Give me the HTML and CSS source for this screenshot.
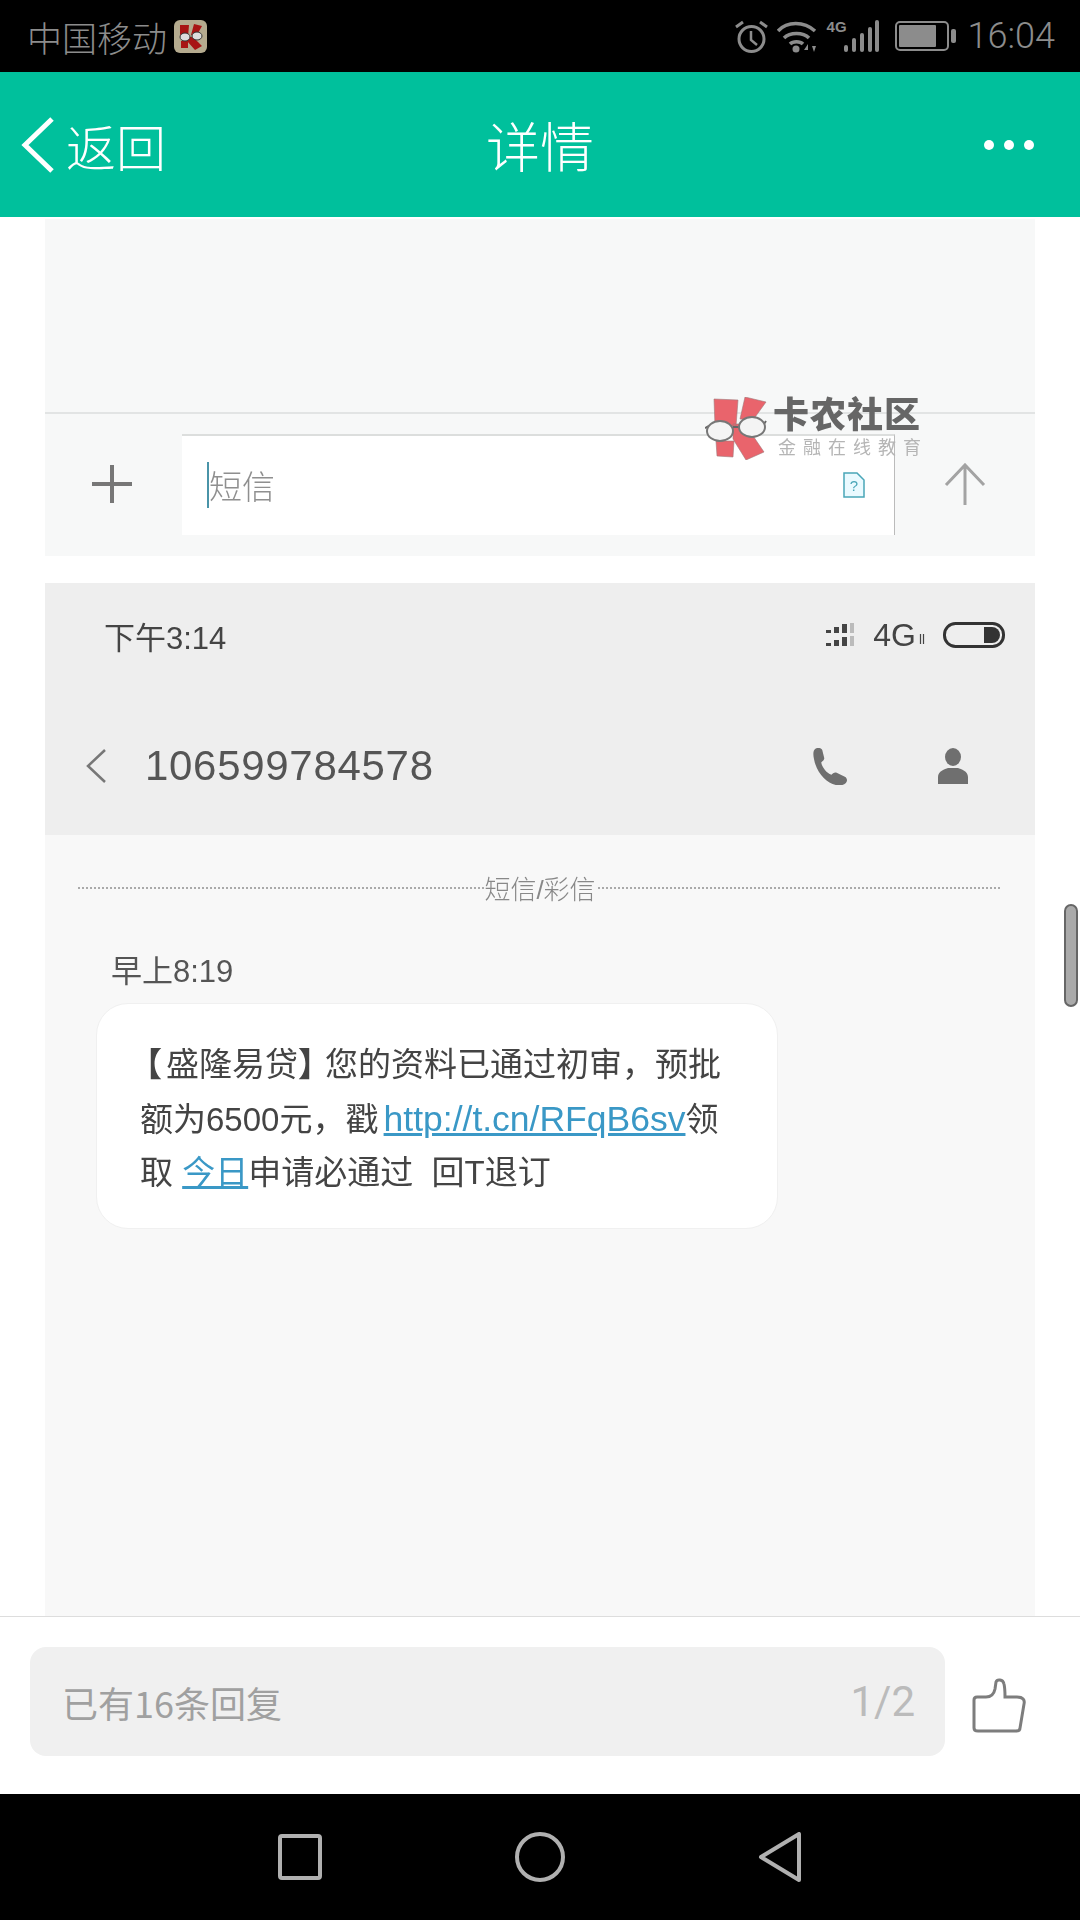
FILE: index.html
```html
<!DOCTYPE html>
<html lang="en">
<head>
    <meta charset="UTF-8">
    <meta name="viewport" content="width=device-width, initial-scale=1.0">
    <title>详情</title>
    <link rel="stylesheet" href="styles.css">
</head>
<body>
    <div class="app">
        <div class="status-bar">
            <div class="carrier">
                <span>中国移动</span>
                <svg class="app-badge" viewBox="0 0 33 33">
                    <rect width="33" height="33" rx="6" fill="#b5ab8f"/>
                    <path d="M6 5h9l-1 12h-8zM20 4l8 2-5 9h-6zM13 17h6l9 9-7 4-8-9zM7 21h7v7H7z" fill="#a81414"/>
                    <ellipse cx="11" cy="17" rx="5" ry="4" fill="#ddd" stroke="#333"/>
                    <ellipse cx="23" cy="16" rx="5" ry="4" fill="#ddd" stroke="#333"/>
                </svg>
            </div>
            <div class="status-icons">
                <svg class="ic-alarm" viewBox="0 0 33 33" fill="none" stroke="#8c8c8c">
                    <circle cx="16.500" cy="19" r="12.500" stroke-width="3"/>
                    <path d="M16 11v9l6 5" stroke-width="2.500"/>
                    <path d="M1 7l7-5M32 7l-7-5" stroke-width="3"/>
                </svg>
                <svg class="ic-wifi" viewBox="0 0 40 33" fill="none" stroke="#8c8c8c" stroke-width="3.500">
                    <path d="M1 11C10 1 27 1 38 11"/>
                    <path d="M7 18c6-6 19-6 25 0"/>
                    <path d="M13 24c3-3 10-3 13 0"/>
                    <circle cx="19" cy="29" r="3.500" fill="#8c8c8c" stroke="none"/>
                    <path d="M31 24l-4 6h4zM33 24v8M35 26h4l-2 6z" fill="#8c8c8c" stroke="none"/>
                </svg>
                <div class="net">
                    <span class="net-label">4G</span>
                    <svg class="ic-signal" viewBox="0 0 36 33" fill="#8c8c8c">
                        <rect x="0" y="25" width="4" height="7" rx="2"/>
                        <rect x="8" y="18" width="4" height="14" rx="2"/>
                        <rect x="16" y="13" width="4" height="19" rx="2"/>
                        <rect x="24" y="7" width="4" height="25" rx="2"/>
                        <rect x="31" y="0" width="4" height="32" rx="2"/>
                    </svg>
                </div>
                <svg class="ic-battery" viewBox="0 0 62 30" fill="none">
                    <rect x="1" y="1" width="52" height="28" rx="4" stroke="#8c8c8c" stroke-width="2"/>
                    <rect x="4" y="4" width="37" height="22" rx="1" fill="#8c8c8c"/>
                    <rect x="56" y="8" width="5" height="14" rx="2" fill="#8c8c8c"/>
                </svg>
                <span class="clock">16:04</span>
            </div>
        </div>

        <div class="title-bar">
            <div class="back">
                <svg class="ic-back" viewBox="0 0 33 56" fill="none" stroke="#fff" stroke-width="5">
                    <path d="M31 2L4 28l27 26"/>
                </svg>
                <span>返回</span>
            </div>
            <div class="title">详情</div>
            <div class="more"><i></i><i></i><i></i></div>
        </div>

        <div class="content">
            <div class="shot shot-top">
                <div class="shot-blank"></div>
                <div class="composer">
                    <svg class="ic-plus" viewBox="0 0 40 40" fill="none" stroke="#777" stroke-width="4">
                        <path d="M0 20h40M20 1v38"/>
                    </svg>
                    <div class="sms-input">
                        <span class="caret"></span>
                        <span class="sms-hint">短信</span>
                        <svg class="ic-sim" viewBox="0 0 24 26" fill="#eafaff" stroke="#4aa6b8" stroke-width="1.500">
                            <path d="M2 1h13l7 7v17H2z"/>
                            <text x="12" y="19" text-anchor="middle" class="sim-mark">?</text>
                        </svg>
                    </div>
                    <svg class="ic-up" viewBox="0 0 42 42" fill="none" stroke="#a3a3a3" stroke-width="3">
                        <path d="M21 42V2M2 22L21 2l19 20"/>
                    </svg>
                </div>
            </div>

            <div class="shot shot-sms">
                <div class="sms-head">
                    <div class="phone-status">
                        <span>下午3:14</span>
                        <div class="phone-icons">
                            <svg class="ic-bars" viewBox="0 0 32 24" fill="#444">
                                <rect x="0" y="7" width="5" height="3"/><rect x="8" y="4" width="5" height="6"/><rect x="16" y="1" width="5" height="9"/>
                                <rect x="24" y="0" width="4" height="10" fill="#bbb"/>
                                <rect x="0" y="20" width="5" height="3"/><rect x="8" y="17" width="5" height="6"/><rect x="16" y="14" width="5" height="9"/>
                                <rect x="24" y="13" width="4" height="10" fill="#bbb"/>
                            </svg>
                            <span class="phone-4g">4G</span>
                            <svg class="ic-updown" viewBox="0 0 8 12" fill="none" stroke="#444" stroke-width="1.200">
                                <path d="M2.500 1v10M5.500 1v10"/>
                            </svg>
                            <svg class="ic-phone-batt" viewBox="0 0 62 26" fill="none">
                                <rect x="1.500" y="1.500" width="59" height="23" rx="11" stroke="#333" stroke-width="3"/>
                                <path d="M41 5h8a8 8 0 0 1 0 16h-8z" fill="#333"/>
                            </svg>
                        </div>
                    </div>
                    <div class="sms-nav">
                        <svg class="ic-chev" viewBox="0 0 20 34" fill="none" stroke="#777" stroke-width="2.500">
                            <path d="M19 1L2 17l17 16"/>
                        </svg>
                        <span class="sender">106599784578</span>
                        <svg class="ic-call" viewBox="0 0 36 36" fill="#6f6f6f">
                            <path d="M2 1c3-2 6-1 7 1l2 8c0 2-2 3-3 4 1 5 5 10 10 12 1-1 3-3 5-2l8 4c2 1 3 4 1 6-3 3-8 3-13 1C11 32 3 22 1 11 0 6 0 3 2 1z"/>
                        </svg>
                        <svg class="ic-person" viewBox="0 0 30 36" fill="#6f6f6f">
                            <ellipse cx="15" cy="9" rx="8" ry="9"/>
                            <path d="M0 36v-7c0-6 7-8 10-9h10c3 1 10 3 10 9v7z"/>
                        </svg>
                    </div>
                </div>
                <div class="sms-body">
                    <div class="divider"><span>短信/彩信</span></div>
                    <div class="msg-time">早上8:19</div>
                    <div class="bubble">
                        <div class="line"><span class="brk-open">【</span>盛隆易贷<span class="brk-close">】</span>您的资料已通过初审，预批</div>
                        <div class="line">额为6500元，戳 <a class="link url">http://t.cn/RFqB6sv</a>领</div>
                        <div class="line">取 <a class="link">今日</a>申请必通过 &nbsp;回T退订</div>
                    </div>
                </div>
            </div>

            <div class="watermark">
                <svg class="wm-logo" viewBox="0 0 62 63">
                    <path d="M9 2l24 1-2 26H10zM11 44h18l-1 16-16-1zM40 0l21 5-13 18-13-1zM28 27h12l19 28-18 8-13-21z" fill="#e9646c" stroke="#a0787a" stroke-width=".6"/>
                    <path d="M0 31l4-2M28 30h7M61 24l-2 3" stroke="#666" stroke-width="2" fill="none"/>
                    <ellipse cx="15" cy="34" rx="13" ry="10" fill="#f4f4f4" stroke="#777" stroke-width="2"/>
                    <ellipse cx="47" cy="30" rx="13" ry="10" fill="#f4f4f4" stroke="#777" stroke-width="2"/>
                </svg>
                <div class="wm-text">
                    <div class="wm-name">卡农社区</div>
                    <div class="wm-sub">金融在线教育</div>
                </div>
            </div>

            <div class="scroll-thumb"></div>
        </div>

        <div class="reply-bar">
            <div class="reply-box">
                <span>已有16条回复</span>
                <span class="page-no">1/2</span>
            </div>
            <svg class="ic-thumb" viewBox="0 0 54 56" fill="none" stroke="#7d7d7d" stroke-width="3">
                <path d="M2 22c0-2 1-3 3-3h9c5 0 8-3 9-8l1-7c1-3 7-3 8 2 1 4 1 9 1 13h12c6 0 8 3 7 7l-4 24c0 2-2 3-4 3H6c-3 0-4-1-4-3z"/>
            </svg>
        </div>

        <div class="nav-bar">
            <svg class="ic-nav" viewBox="0 0 50 50" fill="none" stroke="#b0b0b0" stroke-width="4">
                <rect x="5" y="4" width="40" height="42" rx="2"/>
            </svg>
            <svg class="ic-nav" viewBox="0 0 50 50" fill="none" stroke="#b0b0b0" stroke-width="4">
                <circle cx="25" cy="25" r="23"/>
            </svg>
            <svg class="ic-nav" viewBox="0 0 50 50" fill="none" stroke="#b0b0b0" stroke-width="4" stroke-linejoin="round">
                <path d="M44 2v46L6 25z"/>
            </svg>
        </div>
    </div>
</body>
</html>
```

FILE: styles.css
```css
* {
    box-sizing: border-box;
}

body {
    margin: 0;
    background-color: #fff;
    font-family: "Liberation Sans", "Noto Sans CJK SC", sans-serif;
}

svg {
    display: block;
    flex: none;
}

.app {
    position: relative;
    width: 1080px;
    height: 1920px;
    display: flex;
    flex-direction: column;
    overflow: hidden;
}

/* Status Bar */
.status-bar {
    height: 72px;
    flex: none;
    background-color: #000;
    color: #8c8c8c;
    display: flex;
    justify-content: space-between;
    align-items: center;
    padding: 0 25px 0 27px;
}

.carrier {
    display: flex;
    align-items: center;
    gap: 7px;
    font-size: 35px;
    font-weight: 300;
}

.app-badge {
    width: 33px;
    height: 33px;
}

.status-icons {
    display: flex;
    align-items: center;
}

.ic-alarm {
    width: 33px;
    height: 33px;
}

.ic-wifi {
    width: 40px;
    height: 33px;
    margin-left: 9px;
}

.net {
    position: relative;
    width: 53px;
    height: 33px;
    margin-left: 10px;
}

.net-label {
    position: absolute;
    left: 0;
    top: -1px;
    font-size: 15px;
    font-weight: bold;
    line-height: 16px;
}

.ic-signal {
    position: absolute;
    right: 0;
    top: 0;
    width: 36px;
    height: 33px;
}

.ic-battery {
    width: 62px;
    height: 30px;
    margin-left: 15px;
}

.clock {
    margin-left: 11px;
    font-family: Roboto, sans-serif;
    font-size: 36px;
    font-weight: 300;
}

/* Title Bar */
.title-bar {
    position: relative;
    height: 145px;
    flex: none;
    background-color: #00c09c;
    color: #fff;
    display: flex;
    align-items: center;
    justify-content: space-between;
    padding: 0 46px 0 21px;
}

.back {
    display: flex;
    align-items: center;
    gap: 12px;
    font-size: 50px;
    font-weight: 300;
}

.ic-back {
    width: 33px;
    height: 56px;
}

.title {
    position: absolute;
    left: 0;
    right: 0;
    text-align: center;
    font-size: 54px;
    font-weight: 300;
}

.more {
    display: flex;
    gap: 10px;
}

.more i {
    width: 10px;
    height: 10px;
    border-radius: 50%;
    background-color: #fff;
}

/* Content */
.content {
    position: relative;
    flex: 1;
    min-height: 0;
    padding: 2px 45px 0;
    display: flex;
    flex-direction: column;
    gap: 27px;
}

/* the pasted screenshots are soft, so are these */
.shot {
    filter: blur(0.5px);
}

.shot-top {
    height: 337px;
    flex: none;
    background-color: #f7f8f8;
    display: flex;
    flex-direction: column;
}

.shot-blank {
    height: 193px;
    flex: none;
    border-bottom: 2px solid #e2e4e4;
    box-sizing: content-box;
}

.composer {
    flex: 1;
    display: flex;
    align-items: center;
    padding: 0 49px 2px 47px;
}

.ic-plus {
    width: 40px;
    height: 40px;
}

.sms-input {
    width: 714px;
    height: 101px;
    margin: 0 49px 0 50px;
    padding: 0 28px 0 25px;
    background-color: #fff;
    border-top: 2px solid #dcdedd;
    border-right: 1px solid #bbb;
    display: flex;
    align-items: center;
}

.caret {
    width: 2px;
    height: 46px;
    background-color: #4a94a8;
}

.sms-hint {
    flex: 1;
    font-size: 33px;
    font-weight: 300;
    color: #8f8f8f;
}

.ic-sim {
    width: 24px;
    height: 26px;
}

.sim-mark {
    font-size: 15px;
    fill: #4aa6b8;
    stroke: none;
}

.ic-up {
    width: 42px;
    height: 42px;
}

.shot-sms {
    flex: 1;
    display: flex;
    flex-direction: column;
}

.sms-head {
    height: 252px;
    flex: none;
    background-color: #eee;
}

.phone-status {
    height: 108px;
    padding: 0 30px 4px 59px;
    display: flex;
    align-items: center;
    justify-content: space-between;
    font-size: 31px;
    color: #444;
}

.phone-icons {
    display: flex;
    align-items: center;
}

.ic-bars {
    width: 32px;
    height: 24px;
}

.phone-4g {
    margin-left: 15px;
    font-size: 32px;
}

.ic-updown {
    width: 8px;
    height: 12px;
    margin: 8px 17px 0 2px;
}

.ic-phone-batt {
    width: 62px;
    height: 26px;
}

.sms-nav {
    height: 144px;
    padding: 6px 67px 0 41px;
    display: flex;
    align-items: center;
}

.ic-chev {
    width: 20px;
    height: 34px;
}

.sender {
    flex: 1;
    margin-left: 39px;
    font-size: 42px;
    letter-spacing: 0.7px;
    color: #555;
}

.ic-call {
    width: 37px;
    height: 37px;
}

.ic-person {
    width: 30px;
    height: 36px;
    margin-left: 88px;
}

.sms-body {
    flex: 1;
    background-color: #f8f8f8;
    padding-top: 40px;
}

.divider {
    margin: 0 33px;
    height: 26px;
    display: flex;
    align-items: center;
    justify-content: center;
    font-size: 26px;
    font-weight: 300;
    color: #888;
    background-image: linear-gradient(to right, #aaa 50%, transparent 50%);
    background-size: 4px 2px;
    background-repeat: repeat-x;
    background-position: 0 center;
}

.divider span {
    padding-top: 4px;
    line-height: 26px;
    background-color: #f8f8f8;
}

.msg-time {
    margin: 51px 0 0 66px;
    font-size: 31px;
    line-height: 40px;
    color: #555;
}

.bubble {
    width: 682px;
    height: 226px;
    margin: 11px 0 0 51px;
    padding: 34px 0 0 43px;
    background-color: #fff;
    border: 1px solid #f0f0f0;
    border-radius: 32px;
    font-size: 33px;
    color: #444;
}

.line {
    height: 54px;
    line-height: 54px;
    white-space: nowrap;
}

/* narrower brackets than the font's full width */
.brk-open {
    margin-left: -11px;
    letter-spacing: 4px;
    font-weight: bold;
}

.brk-close {
    letter-spacing: -6px;
    font-weight: bold;
}

.link {
    color: #3a98c6;
    text-decoration: underline;
}

.url {
    margin-left: -4px;
    font-size: 35.500px;
}

/* Watermark over the pasted picture */
.watermark {
    position: absolute;
    left: 705px;
    top: 180px;
    display: flex;
    gap: 6px;
    filter: blur(0.5px);
}

.wm-logo {
    width: 62px;
    height: 63px;
}

.wm-name {
    font-size: 36px;
    line-height: 38px;
    font-weight: 900;
    letter-spacing: 1px;
    color: #666;
}

.wm-sub {
    margin: 3px 0 0 5px;
    font-size: 18px;
    line-height: 20px;
    letter-spacing: 7px;
    color: #b5b5b5;
    white-space: nowrap;
}

.scroll-thumb {
    position: absolute;
    left: 1064px;
    top: 687px;
    width: 14px;
    height: 103px;
    background-color: #aaa;
    border: 2px solid #666;
    border-radius: 7px;
}

/* Reply Bar */
.reply-bar {
    height: 178px;
    flex: none;
    border-top: 1px solid #ddd;
    padding: 30px 0 0 30px;
    background-color: #fff;
    display: flex;
    align-items: flex-start;
}

.reply-box {
    width: 915px;
    height: 109px;
    background-color: #f0f0f0;
    border-radius: 16px;
    padding: 0 30px 0 32px;
    display: flex;
    align-items: center;
    justify-content: space-between;
    font-family: "Noto Sans CJK SC", sans-serif;
    font-size: 36px;
    color: #a0a0a0;
}

.page-no {
    font-family: Roboto, sans-serif;
    font-size: 42px;
    color: #bbb;
}

.ic-thumb {
    width: 54px;
    height: 56px;
    margin: 31px 0 0 27px;
}

/* Nav Bar */
.nav-bar {
    height: 126px;
    flex: none;
    background-color: #000;
    display: flex;
    align-items: center;
    justify-content: center;
    gap: 190px;
}

.ic-nav {
    width: 50px;
    height: 50px;
}
```
